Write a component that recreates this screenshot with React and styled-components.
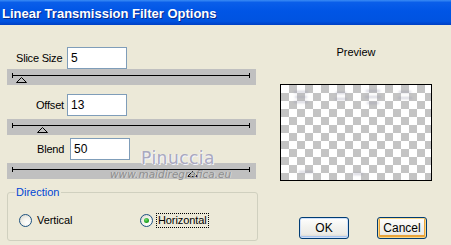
import React from 'react'
import styled, { createGlobalStyle } from 'styled-components'

const GlobalStyle = createGlobalStyle`
  html, body {
    margin: 0;
    padding: 0;
    background: #ece9d8;
  }
  body {
    font-family: "Liberation Sans", Arial, sans-serif;
    font-size: 11px;
    color: #000;
  }
`

const Window = styled.div`
  position: relative;
  width: 451px;
  height: 245px;
  overflow: hidden;
  background: #ece9d8;
  display: flex;
  flex-direction: column;
`

Window.TitleBar = styled.div`
  height: 25px;
  flex-shrink: 0;
  display: flex;
  align-items: center;
  padding-left: 2px;
  background: linear-gradient(to bottom, #3a8cf5 0%, #0a5ee9 10%, #0055e5 45%, #0053e0 85%, #0040c4 100%);
`

Window.Title = styled.div`
  font-family: "Liberation Sans", Arial, sans-serif;
  font-weight: 700;
  font-size: 13px;
  color: #fff;
  text-shadow: 1px 1px 0 #0a2a8a;
  margin-top: 1px;
`

Window.Body = styled.div`
  flex: 1;
  display: flex;
`

const Controls = styled.div`
  width: 251px;
  padding-left: 7px;
  display: flex;
  flex-direction: column;
`

const Field = styled.div`
  display: flex;
  align-items: center;
  height: 22px;
  margin-top: ${props => props.top}px;
  padding-left: ${props => props.indent}px;
`

Field.Label = styled.label`
  width: ${props => props.width}px;
  flex-shrink: 0;
  font-size: 11px;
  letter-spacing: -0.2px;
  line-height: 13px;
`

Field.Input = styled.div`
  box-sizing: border-box;
  width: 60px;
  height: 22px;
  border: 1px solid #7f9db9;
  background: #fff;
  font-size: 12px;
  line-height: 18px;
  padding: 1px 3px;
`

const Slider = styled.div`
  position: relative;
  width: 249px;
  height: 16px;
  margin-top: ${props => props.top}px;
  background: #c0c0c0;
`

Slider.Line = styled.div`
  position: absolute;
  left: 5px;
  right: 6px;
  top: 6px;
  height: 1px;
  background: #000;

  &::before, &::after {
    content: '';
    position: absolute;
    top: -2px;
    width: 1px;
    height: 5px;
    background: #000;
  }
  &::before { left: 0; }
  &::after { right: 0; }
`

Slider.Thumb = styled.svg`
  position: absolute;
  top: 8px;
  width: 11px;
  height: 6px;
`

const Group = styled.fieldset`
  box-sizing: border-box;
  margin: 7px 0 0 0;
  width: 251px;
  height: 55px;
  padding: 0 0 0 7px;
  border: 1px solid #d0d0bf;
  border-radius: 3px;
`

Group.Legend = styled.legend`
  padding: 0 2px 0 1px;
  color: #0046d5;
  font-size: 11px;
  line-height: 13px;
`

Group.Options = styled.div`
  display: grid;
  grid-template-columns: 121px auto;
  align-items: center;
  margin: 14px 0 0 4px;
`

const Radio = styled.div`
  display: flex;
  align-items: center;
  gap: 2px;
`

Radio.Circle = styled.div`
  box-sizing: border-box;
  width: 13px;
  height: 13px;
  border-radius: 50%;
  border: 1px solid #1c5180;
  background: radial-gradient(circle at 65% 70%, #ffffff 0%, #f3f2ec 45%, #d5d3c8 100%);
  display: flex;
  align-items: center;
  justify-content: center;

  &::after {
    content: '';
    display: ${props => (props.checked ? 'block' : 'none')};
    width: 5px;
    height: 5px;
    border-radius: 50%;
    background: radial-gradient(circle at 40% 35%, #6fe06f 0%, #21a121 60%, #1a8a1a 100%);
  }
`

Radio.Text = styled.span`
  font-size: 11px;
  letter-spacing: -0.1px;
  line-height: 13px;
  padding: 0 1px 0 1px;
  margin-left: 1px;
  border: 1px dotted ${props => (props.focused ? '#000' : 'transparent')};
`

const Side = styled.div`
  flex: 1;
  padding: 21px 0 0 22px;
  display: flex;
  flex-direction: column;
  align-items: flex-start;
`

Side.Caption = styled.div`
  width: 152px;
  text-align: center;
  font-size: 11px;
  line-height: 13px;
`

const Preview = styled.div`
  position: relative;
  box-sizing: border-box;
  width: 152px;
  height: 97px;
  margin-top: 25px;
  border: 1px solid #000;
  background-color: #fff;
  background-image: conic-gradient(#c4c4c4 25%, transparent 0 50%, #c4c4c4 0 75%, transparent 0);
  background-size: 16px 16px;
  overflow: hidden;
`

Preview.Smudge = styled.div`
  position: absolute;
  height: 2px;
  background: rgba(150, 150, 175, 0.45);
  filter: blur(0.8px);
`

const Buttons = styled.div`
  display: flex;
  gap: 28px;
  margin-top: 36px;
  padding-left: 19px;
`

const Button = styled.button`
  box-sizing: border-box;
  width: 50px;
  height: 22px;
  padding: 0;
  border: 1px solid #003c74;
  border-radius: 3px;
  font-family: "Liberation Sans", Arial, sans-serif;
  font-size: 12px;
  color: #000;
  background: linear-gradient(to bottom, #ffffff 0%, #f4f4f0 40%, #ecebe6 80%, #d6d0c5 100%);
  box-shadow: ${props => (props.focused
    ? 'inset 0 0 0 1px #fbd98a, inset 0 -1px 0 2px #e8a33a'
    : 'inset 0 0 0 1px #cfe0fa, inset 0 -1px 0 1px #a8c4ee')};
`

const Watermark = styled.div`
  position: absolute;
  left: ${props => props.x}px;
  top: ${props => props.y}px;
  pointer-events: none;
`

Watermark.Name = styled.div`
  font-family: "DejaVu Sans", Verdana, sans-serif;
  font-size: 17px;
  letter-spacing: 0.5px;
  color: #a9a8bf;
  text-shadow: 1px 1px 0 #f4f4fa, -1px 0 0 #f0f0f6;
`

Watermark.Site = styled.div`
  font-family: "DejaVu Sans", Verdana, sans-serif;
  font-style: italic;
  font-size: 10.5px;
  color: #8e8e8e;
  text-shadow: 1px 0 0 #d8d8d8;
`

const fields = [
  { label: 'Slice Size', value: '5', indent: 9, width: 51, top: 22, sliderTop: 0, thumb: 9 },
  { label: 'Offset', value: '13', indent: 29, width: 31, top: 9, sliderTop: 3, thumb: 30 },
  { label: 'Blend', value: '50', indent: 30, width: 33, top: 3, sliderTop: 3, thumb: 180 }
]

const smudges = [
  { x: 13, y: 6, w: 14 }, { x: 14, y: 11, w: 12 }, { x: 13, y: 16, w: 14 },
  { x: 55, y: 7, w: 10 }, { x: 54, y: 13, w: 12 },
  { x: 85, y: 5, w: 14 }, { x: 84, y: 11, w: 16 }, { x: 86, y: 17, w: 12 },
  { x: 118, y: 6, w: 12 }, { x: 117, y: 12, w: 14 },
  { x: 18, y: 86, w: 14 }, { x: 72, y: 88, w: 10 }
]

export default function App () {
  return (
    <Window>
      <GlobalStyle />
      <Window.TitleBar>
        <Window.Title>Linear Transmission Filter Options</Window.Title>
      </Window.TitleBar>
      <Window.Body>
        <Controls>
          {fields.map(item => (
            <React.Fragment key={item.label}>
              <Field top={item.top} indent={item.indent}>
                <Field.Label width={item.width}>{item.label}</Field.Label>
                <Field.Input>{item.value}</Field.Input>
              </Field>
              <Slider top={item.sliderTop}>
                <Slider.Line />
                <Slider.Thumb style={{ left: item.thumb }} viewBox='0 0 11 6'>
                  <polygon points='0.5,5.5 5.5,0.5 10.5,5.5' fill='none' stroke='#000' strokeWidth='1' />
                </Slider.Thumb>
              </Slider>
            </React.Fragment>
          ))}
          <Group>
            <Group.Legend>Direction</Group.Legend>
            <Group.Options>
              <Radio>
                <Radio.Circle />
                <Radio.Text>Vertical</Radio.Text>
              </Radio>
              <Radio>
                <Radio.Circle checked />
                <Radio.Text focused>Horizontal</Radio.Text>
              </Radio>
            </Group.Options>
          </Group>
        </Controls>
        <Side>
          <Side.Caption>Preview</Side.Caption>
          <Preview>
            {smudges.map((s, i) => (
              <Preview.Smudge key={i} style={{ left: s.x, top: s.y, width: s.w }} />
            ))}
          </Preview>
          <Buttons>
            <Button>OK</Button>
            <Button focused>Cancel</Button>
          </Buttons>
        </Side>
      </Window.Body>
      <Watermark x={141} y={148}>
        <Watermark.Name>Pinuccia</Watermark.Name>
      </Watermark>
      <Watermark x={110} y={168}>
        <Watermark.Site>www.maidiregrafica.eu</Watermark.Site>
      </Watermark>
    </Window>
  )
}
